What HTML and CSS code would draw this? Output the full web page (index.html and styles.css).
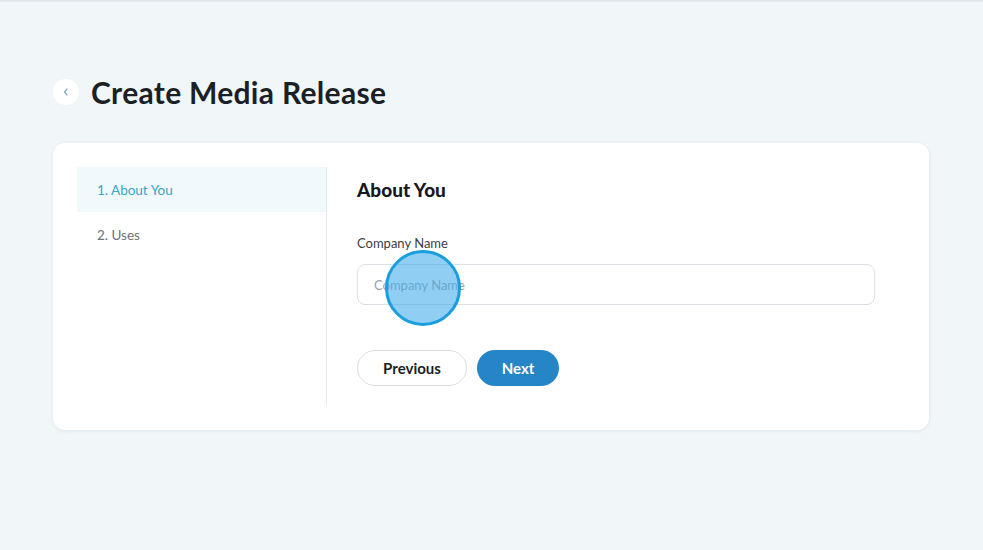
FILE: index.html
```html
<!DOCTYPE html>
<html>
<head>
<meta charset="utf-8">
<link rel="stylesheet" href="styles.css">
</head>
<body>
<div class="topbar"></div>
<main class="page">
  <header class="page-head">
    <button class="back" aria-label="Back">
      <svg width="10" height="10" viewBox="0 0 10 10"><path d="M6 2 L3.5 5 L6 8" fill="none" stroke="#7fb0c4" stroke-width="1.2" stroke-linecap="round" stroke-linejoin="round"/></svg>
    </button>
    <h1 class="title">Create Media Release</h1>
  </header>
  <section class="card">
    <nav class="steps">
      <div class="step active">1. About You</div>
      <div class="step">2. Uses</div>
    </nav>
    <div class="content">
      <h2 class="section-title">About You</h2>
      <label class="label">Company Name</label>
      <div class="field">
        <input class="input" placeholder="Company Name">
        <span class="cursor"></span>
      </div>
      <div class="actions">
        <button class="btn btn-outline">Previous</button>
        <button class="btn btn-primary">Next</button>
      </div>
    </div>
  </section>
</main>
</body>
</html>
```
FILE: styles.css
```css
* { box-sizing: border-box; }
html, body { margin: 0; padding: 0; }
body {
  background: #f1f6f9;
  font-family: "Lato", "Noto Sans", sans-serif;
  color: #1d2127;
  width: 983px;
  height: 550px;
  overflow: hidden;
}
.topbar {
  height: 3px;
  background: linear-gradient(#dfe3e8, #f1f6f9);
}
.page {
  padding: 74px 54px 0 53px;
}
.page-head {
  display: flex;
  align-items: center;
  gap: 12px;
  height: 30px;
}
.back {
  width: 26px;
  height: 26px;
  border-radius: 50%;
  border: none;
  background: #fff;
  display: flex;
  align-items: center;
  justify-content: center;
  padding: 0;
}
.title {
  margin: 0;
  font-size: 30px;
  font-weight: 700;
  letter-spacing: 0.3px;
  color: #1b1f26;
}
.card {
  margin-top: 36px;
  background: #fff;
  border-radius: 12px;
  box-shadow: 0 1px 4px rgba(30, 50, 70, 0.08);
  padding: 24px;
  display: flex;
  height: 287px;
}
.steps {
  width: 250px;
  border-right: 1px solid #e6e9ec;
  display: flex;
  flex-direction: column;
}
.step {
  height: 45px;
  padding: 0 20px;
  display: flex;
  align-items: center;
  font-size: 13.5px;
  color: #6b737b;
}
.step.active {
  background: #f0f9fc;
  color: #3aa6c4;
}
.content {
  flex: 1;
  padding: 10px 30px 0 30px;
  display: flex;
  flex-direction: column;
}
.section-title {
  margin: 0;
  font-size: 19px;
  font-weight: 900;
  color: #16191e;
  line-height: 26px;
}
.label {
  margin-top: 31px;
  font-size: 13px;
  color: #3a3f45;
  line-height: 18px;
}
.field {
  position: relative;
  margin-top: 12px;
  width: 518px;
}
.input {
  width: 100%;
  height: 41px;
  border: 1px solid #dcdfe3;
  border-radius: 8px;
  padding: 0 16px;
  font-family: inherit;
  font-size: 13px;
  color: #1d2127;
  outline: none;
}
.input::placeholder { color: #9aa1a8; }
.cursor {
  position: absolute;
  left: 28px;
  top: -14px;
  width: 76px;
  height: 76px;
  border-radius: 50%;
  background: rgba(70, 175, 235, 0.6);
  border: 3px solid #1a9ee0;
  pointer-events: none;
}
.actions {
  margin-top: 45px;
  display: flex;
  gap: 10px;
}
.btn {
  height: 36px;
  border-radius: 18px;
  font-family: inherit;
  font-size: 15px;
  font-weight: 700;
  padding: 0;
}
.btn-outline {
  width: 110px;
  background: #fff;
  border: 1px solid #d9dde1;
  color: #1b1f26;
}
.btn-primary {
  width: 82px;
  background: #2585c6;
  border: none;
  color: #fff;
}
```
